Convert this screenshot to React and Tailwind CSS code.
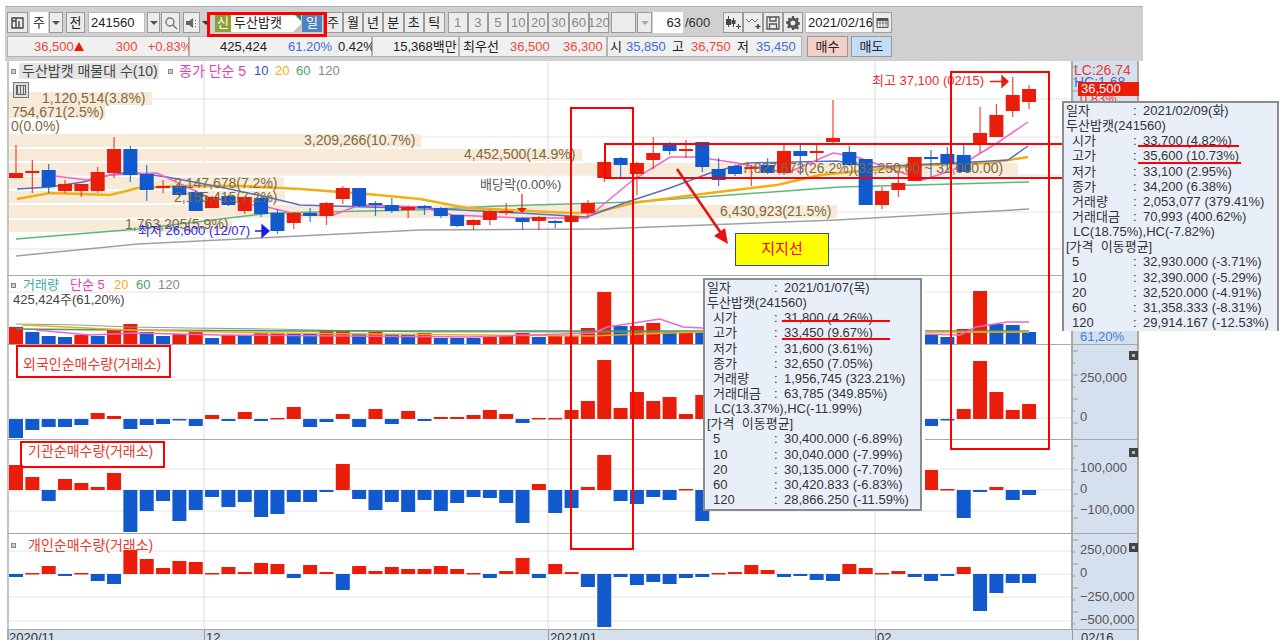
import React from 'react';

const RED = '#ea1c0a';
const BLUE = '#1159cc';
const barX = (i) => 16 + 16.34 * i;

// [colour, bodyTop, bodyBottom, wickTop, wickBottom]
const candles = [
  ['r', 173, 178, 145, 178], ['r', 171, 173, 160, 193], ['b', 170, 187, 164, 193], ['r', 184, 191, 180, 193],
  ['r', 184, 191, 184, 197], ['r', 172, 191, 167, 193], ['r', 149, 173, 137, 178], ['b', 149, 175, 146, 182],
  ['b', 174, 190, 165, 201], ['r', 186, 187, 180, 193], ['b', 186, 195, 183, 197], ['b', 192, 211, 190, 211],
  ['r', 197, 208, 196, 208], ['b', 196, 205, 195, 206], ['r', 197, 211, 196, 214], ['b', 198, 214, 197, 217],
  ['b', 213, 231, 209, 234], ['r', 213, 223, 212, 229], ['b', 213, 216, 208, 222], ['r', 203, 216, 202, 225],
  ['r', 188, 199, 186, 204], ['b', 188, 206, 188, 207], ['b', 203, 205, 201, 216], ['b', 205, 211, 198, 213],
  ['r', 207, 210, 206, 218], ['b', 206, 207, 205, 215], ['b', 208, 216, 207, 218], ['b', 215, 226, 215, 227],
  ['r', 220, 225, 219, 230], ['r', 211, 220, 210, 225], ['r', 211, 212, 203, 215], ['b', 218, 222, 217, 230],
  ['r', 217, 221, 216, 230], ['b', 221, 223, 220, 228], ['r', 216, 222, 215, 223], ['r', 203, 213, 200, 218],
  ['r', 162, 178, 162, 182], ['b', 158, 165, 157, 177], ['r', 163, 174, 162, 195], ['r', 153, 160, 137, 169],
  ['b', 144, 151, 142, 155], ['r', 149, 150, 140, 158], ['b', 142, 167, 142, 172], ['b', 169, 180, 158, 186],
  ['b', 166, 174, 165, 176], ['r', 167, 168, 165, 186], ['b', 165, 173, 158, 174], ['r', 151, 173, 145, 175],
  ['b', 151, 156, 145, 175], ['r', 151, 152, 145, 162], ['r', 138, 142, 100, 145], ['b', 152, 165, 146, 166],
  ['b', 159, 205, 159, 205], ['r', 191, 205, 187, 209], ['r', 183, 190, 173, 197], ['r', 157, 181, 157, 181],
  ['b', 157, 159, 150, 177], ['b', 154, 164, 147, 170], ['b', 155, 172, 145, 172], ['r', 133, 144, 107, 153],
  ['r', 115, 137, 104, 137], ['r', 95, 111, 77, 117], ['r', 89, 102, 85, 109],
];

const ma120 = '16,256 138,244 420,230 600,229 837,220 1029,209';
const ma60 = '16,239 138,229 270,213 417,210 500,206 633,202 840,187 1029,182';
const ma20 = '17,199 50,193 110,195 138,188 180,186 240,186 300,189 367,194 420,199 467,208 570,213 593,213 633,203 710,193 777,185 820,175 923,165 990,163 1028,157';
const ma10 = '17,189 50,187 83,182 110,175 130,172 167,177 220,187 267,197 300,205 367,207 420,208 520,213 587,217 627,202 670,188 710,173 747,163 837,161 873,167 973,162 1008,160 1028,146';
const ma5 = '55,176 87,180 110,175 157,173 187,187 207,197 267,207 300,215 333,215 360,205 420,207 453,215 520,218 587,218 633,180 670,157 697,157 737,163 787,173 833,153 857,157 923,180 953,170 997,143 1028,122';

// peach volume-profile bands: [top, height, right edge]
const bands = [
  [92, 13, 152], [105, 13, 105], [134, 13, 421], [149, 12, 582], [163, 12, 1018],
  [177, 12, 284], [191, 12, 285], [205, 13, 837], [220, 12, 232],
];

const volume = [
  ['r', 327], ['b', 332], ['b', 336], ['b', 337], ['r', 335], ['b', 336], ['r', 330], ['r', 324], ['b', 332], ['b', 336],
  ['r', 334], ['r', 331], ['b', 338], ['r', 335], ['b', 335], ['r', 333], ['r', 333], ['b', 333], ['b', 334], ['r', 330],
  ['r', 330], ['b', 334], ['r', 332], ['b', 334], ['b', 334], ['r', 333], ['b', 338], ['b', 338], ['b', 338], ['r', 337],
  ['r', 335], ['r', 333], ['b', 337], ['r', 336], ['r', 336], ['r', 328], ['r', 292], ['b', 326], ['r', 326], ['r', 323],
  ['b', 332], ['r', 332], ['b', 332], ['b', 333], ['r', 334], ['b', 335], ['r', 333], ['b', 334], ['r', 335], ['b', 336],
  ['r', 334], ['r', 333], ['b', 333], ['r', 335], ['r', 334], ['b', 334], ['b', 335], ['b', 337], ['r', 329], ['r', 291],
  ['b', 324], ['b', 325], ['b', 332],
];

// signed pixel heights from the zero line, up is positive
const foreign = [
  -19, -11, -8, -8, -6, 6, 3, -10, -6, -5, -1, -7, 4, -2, 7, -2, 1, 12, -8, -3, 5, -8, 10, -5, 8, -2, 2, 2, 4, 9, 5, -4, 1, 1, 9, 18, 59, 11, 27, 18, 22, 5, 24,
  -6, -3, 4, 5, 8, -5, -3, 6, 5, -4, 4, 2, -11, -7, -1, 10, 58, 27, 9, 15,
];
const institution = [
  25, 13, -11, 11, 7, 3, 17, -42, -21, -11, -31, -20, -7, -17, -12, -27, -24, -12, -12, -2, 26, -9, -20, -12, -22, -10, -21, -13, -7, -8, -13, -33, 6, -23, -18, 3, 35, -11, -14, -7, -10, 1, -31,
  -10, -5, 3, 6, -8, 4, -6, -12, 9, -4, 2, -3, -6, 20, 1, -28, -2, 3, -10, -5,
];
const individual = [
  -3, 1, 8, -2, 1, -7, -10, 24, 15, 6, 13, 12, 1, 7, 2, 11, 10, -4, 9, 2, -16, 8, 3, 7, 5, 5, 8, 5, 1, -4, 3, 16, -4, 10, 2, -13, -53, -3, -11, -8, -10, -4, -3,
  1, 2, 9, 4, -3, -2, -6, -7, 10, 6, 1, 3, -3, -7, -2, 7, -37, -19, -9, -9,
];

const tip1 = [
  ['일자', '2021/01/07(목)', false], ['두산밥캣(241560)'],
  ['시가', '31,800 (4.26%)', true], ['고가', '33,450 (9.67%)', true], ['저가', '31,600 (3.61%)', true], ['종가', '32,650 (7.05%)', true],
  ['거래량', '1,956,745 (323.21%)', true], ['거래대금', '63,785 (349.85%)', true], ['  LC(13.37%),HC(-11.99%)'], ['[가격  이동평균]'],
  ['5', '30,400.000 (-6.89%)', true], ['10', '30,040.000 (-7.99%)', true], ['20', '30,135.000 (-7.70%)', true], ['60', '30,420.833 (-6.83%)', true], ['120', '28,866.250 (-11.59%)', true],
];
const tip2 = [
  ['일자', '2021/02/09(화)', false], ['두산밥캣(241560)'],
  ['시가', '33,700 (4.82%)', true], ['고가', '35,600 (10.73%)', true], ['저가', '33,100 (2.95%)', true], ['종가', '34,200 (6.38%)', true],
  ['거래량', '2,053,077 (379.41%)', true], ['거래대금', '70,993 (400.62%)', true], ['  LC(18.75%),HC(-7.82%)'], ['[가격  이동평균]'],
  ['5', '32,930.000 (-3.71%)', true], ['10', '32,390.000 (-5.29%)', true], ['20', '32,520.000 (-4.91%)', true], ['60', '31,358.333 (-8.31%)', true], ['120', '29,914.167 (-12.53%)', true],
];

function Btn({ w, children, className = '' }) {
  return (
    <div className={`flex h-[21px] shrink-0 items-center justify-center border border-[#9a9a9a] bg-[#ececec] ${w} ${className}`}>
      {children}
    </div>
  );
}

function Caret({ color = '#555' }) {
  return <div className="h-0 w-0 border-x-[4px] border-t-[4px] border-x-transparent" style={{ borderTopColor: color }} />;
}

function Toolbar() {
  return (
    <div className="flex h-[55px] flex-col gap-[3px] border-t border-[#a8aec4] bg-[#d0d0d0] pl-[2px] pt-[5px] text-[13px] leading-4 text-[#222]">
      <div className="flex items-center">
        <Btn w="w-[21px]">
          <svg width="15" height="15" viewBox="0 0 15 15" fill="none" stroke="#444" strokeWidth="1.4"><path d="M2 3h11v10H2zM6 3v10M2 6h4M9 6v7" /></svg>
        </Btn>
        <div className="ml-[2px] flex h-[21px] w-[18px] items-center justify-center bg-white">주</div>
        <Btn w="w-[14px]" className="ml-[1px]"><Caret /></Btn>
        <Btn w="w-[19px]" className="ml-[3px]">전</Btn>
        <div className="ml-[3px] flex h-[21px] w-[57px] items-center border border-[#bbb] bg-white pl-[2px]">241560</div>
        <Btn w="w-[13px]" className="ml-[2px]"><Caret /></Btn>
        <Btn w="w-[19px]" className="ml-[1px]">
          <svg width="14" height="14" viewBox="0 0 14 14" fill="none" stroke="#777" strokeWidth="1.4"><circle cx="6" cy="6" r="4" /><path d="M9 9l4 4" /></svg>
        </Btn>
        <Btn w="w-[17px]" className="ml-[3px]">
          <svg width="13" height="12" viewBox="0 0 13 12" fill="#666"><path d="M1 4h3l4-3v10L4 8H1z" /><path d="M10 3h1v1h-1zM10 6h1v1h-1zM10 9h1v1h-1z" /></svg>
        </Btn>
        <div className="ml-[2px] flex w-[8px] justify-center"><Caret color="#333" /></div>
        <div className="ml-[5px] flex h-[19px] w-[16px] items-center justify-center bg-[#8c9f34] text-white">신</div>
        <div className="relative flex h-[19px] w-[70px] items-center bg-white pl-[3px] text-[13px]">
          두산밥캣
          <div className="absolute right-0 top-0 h-0 w-0 border-l-[8px] border-t-[8px] border-l-transparent border-t-[#16a05a]" />
          <div className="absolute bottom-0 right-0 h-0 w-0 border-b-[8px] border-l-[8px] border-b-[#c4c4c4] border-l-transparent" />
        </div>
        <div className="ml-[1px] flex h-[19px] w-[20px] items-center justify-center bg-[#4f82c0] text-white">일</div>
        <div className="ml-[1px] flex">
          {['주', '월', '년'].map((t) => <Btn key={t} w="w-[20px]">{t}</Btn>)}
        </div>
        <div className="flex">
          {['분', '초', '틱'].map((t) => <Btn key={t} w="w-[20.5px]">{t}</Btn>)}
        </div>
        <div className="ml-[3px] flex text-[#888]">
          {['1', '3', '5', '10', '20', '30', '60', '120'].map((t) => <Btn key={t} w="w-[20.2px]">{t}</Btn>)}
        </div>
        <Btn w="w-[25px]" className="ml-[2px]" />
        <Btn w="w-[15px]" className="ml-[1px]"><Caret color="#aaa" /></Btn>
        <div className="ml-[1px] flex h-[21px] w-[30px] items-center justify-end bg-white pr-[2px]">63</div>
        <div className="ml-[2px] w-[38px] text-[#333]">/600</div>
        <Btn w="w-[20px]">
          <svg width="16" height="14" viewBox="0 0 16 14" fill="#444"><path d="M3 0h1v11H3zM1 3h5v6H1zM8 2h1v9H8zM6.5 4h4v4h-4zM13 8h1v2h2v1h-2v2h-1v-2h-2v-1h2z" /></svg>
        </Btn>
        <Btn w="w-[20px]">
          <svg width="16" height="14" viewBox="0 0 16 14" fill="none" stroke="#777"><path d="M1 3l3 3 3-3 3 3 3-3" /><path d="M13 8v5M10.500 10.500h5" stroke="#444" strokeWidth="1.500" /></svg>
        </Btn>
        <Btn w="w-[20px]">
          <svg width="14" height="14" viewBox="0 0 14 14" fill="none" stroke="#555" strokeWidth="1.300"><path d="M1 1h12v12H1zM4 1v4h6V1M3.500 13V8h7v5" /></svg>
        </Btn>
        <Btn w="w-[20px]">
          <svg width="14" height="14" viewBox="0 0 14 14" fill="#555"><path d="M6 0h2l.4 2 1.500.6L11.600 1.500l1.400 1.400-1.100 1.700.6 1.500 2 .4v2l-2 .4-.6 1.500 1.100 1.700-1.400 1.400-1.700-1.100-1.500.6L8 14H6l-.4-2-1.500-.6-1.700 1.100L1 11.100l1.100-1.700-.6-1.500L0 7.500v-2l2-.4.6-1.500L1.500 2.900 2.900 1.500l1.700 1.100L5.600 2zM7 4.500a2.500 2.500 0 100 5 2.500 2.500 0 000-5z" /></svg>
        </Btn>
        <div className="ml-[2px] flex h-[21px] w-[68px] items-center border border-[#bbb] bg-white pl-[2px] text-[#222]">2021/02/16</div>
        <Btn w="w-[19px]">
          <svg width="13" height="12" viewBox="0 0 13 12" fill="none" stroke="#555"><path d="M1 1.500h11v9H1z" /><path d="M1 3h11" strokeWidth="2" /><path d="M4 3v7M7 3v7M10 3v7M1 6h11" strokeWidth=".6" /></svg>
        </Btn>
      </div>
      <div className="flex items-center">
        <Quote w="w-[182px]">
          <span className="ml-[26px] w-[43px] text-[#ea4a3c]">36,500</span>
          <span className="h-0 w-0 border-x-[5px] border-b-[9px] border-x-transparent border-b-[#ea1c0a]" />
          <span className="ml-[32px] w-[19px] text-[#ea4a3c]">300</span>
          <span className="ml-[13px] text-[#ea4a3c]">+0.83%</span>
        </Quote>
        <Quote w="w-[183px]">
          <span className="ml-[30px] w-[45px]">425,424</span>
          <span className="ml-[23px] w-[39px] text-[#3f6fcf]">61.20%</span>
          <span className="ml-[11px]">0.42%</span>
        </Quote>
        <Quote w="w-[87px]"><span className="ml-[20px]">15,368백만</span></Quote>
        <Quote w="w-[148px]">
          <span className="ml-[3px] w-[37px]">최우선</span>
          <span className="ml-[10px] w-[39px] text-[#ea4a3c]">36,500</span>
          <span className="ml-[14px] text-[#ea4a3c]">36,300</span>
        </Quote>
        <Quote w="w-[195px]">
          <span className="ml-[2px] w-[16px]">시</span>
          <span className="w-[40px] text-[#3f6fcf]">35,850</span>
          <span className="ml-[6px] w-[19px]">고</span>
          <span className="w-[39px] text-[#ea4a3c]">36,750</span>
          <span className="ml-[7px] w-[19px]">저</span>
          <span className="text-[#3f6fcf]">35,450</span>
        </Quote>
        <div className="ml-[5px] flex h-[21px] w-[41px] items-center justify-center border border-[#9a9a9a] bg-[#f5d0c8]">매수</div>
        <div className="ml-[3px] flex h-[21px] w-[41px] items-center justify-center border border-[#9a9a9a] bg-[#c5dcf5]">매도</div>
      </div>
    </div>
  );
}

function Quote({ w, children }) {
  return <div className={`flex h-[21px] shrink-0 items-center whitespace-nowrap border border-[#b4b4b4] bg-[#f0f0f0] ${w}`}>{children}</div>;
}

function Grid({ top, height, lines }) {
  return (
    <g>
      {lines.map((y) => <line key={y} x1="8" x2="1072" y1={y} y2={y} stroke="#e4e4e4" strokeWidth="1" />)}
      {[204, 548, 875].map((x) => <line key={x} x1={x} x2={x} y1={top} y2={top + height} stroke="#dcdcdc" strokeWidth="1" />)}
    </g>
  );
}

function Bars({ data, zero }) {
  return data.map((h, i) => (
    <rect key={i} x={barX(i) - 7} width="14" y={h > 0 ? zero - h : zero} height={Math.max(Math.abs(h), 1.5)} fill={h > 0 ? RED : BLUE} />
  ));
}

function Panel({ top, height, lines, children, axis }) {
  return (
    <div className="flex border-b border-[#a8a8a8]" style={{ height }}>
      <div className="relative w-[1064px] shrink-0 border-l-2 border-[#c4c4c4] bg-white">
        <svg width="1062" height={height - 1} viewBox={`9 ${top} 1062 ${height - 1}`} className="absolute left-0 top-0">
          <Grid top={top} height={height} lines={lines} />
          {children}
        </svg>
      </div>
      <div className="relative w-[68px] shrink-0 border-x-2 border-[#a8a8a8] bg-[#d5e0ee]">
        <svg width="8" height={height - 1} className="absolute left-0 top-0">
          {Array.from({ length: Math.floor(height / 12) }, (_, i) => (
            <line key={i} x1="0" x2={i % 2 ? 2 : 5} y1={6 + i * 12} y2={6 + i * 12} stroke="#999" />
          ))}
        </svg>
        {axis}
      </div>
    </div>
  );
}

function Label({ x, y, className = '', children }) {
  return (
    <div className={`absolute whitespace-pre leading-4 ${className}`} style={{ left: x, top: y - 8 }}>
      {children}
    </div>
  );
}

function Close({ y }) {
  return (
    <div className="absolute left-[56px] flex h-[9px] w-[9px] items-center justify-center bg-[#444]" style={{ top: y }}>
      <div className="h-[3px] w-[3px] bg-[#bbb]" />
    </div>
  );
}

function Tip({ className, rows }) {
  return (
    <div className={`absolute border-2 border-[#8c8c8c] bg-[#e8eff9] pl-[2px] text-[13px] leading-[15.15px] text-[#333] ${className}`}>
      {rows.map((r, i) => (
        <div key={i} className="flex h-[15.15px] whitespace-pre">
          {r.length === 1 ? r[0] : (
            <>
              <div className={`w-[67px] shrink-0 ${r[2] ? 'pl-[6px]' : ''}`}>{r[0]}</div>
              <div className="w-[10px] shrink-0">:</div>
              <div>{r[1]}</div>
            </>
          )}
        </div>
      ))}
    </div>
  );
}

export default function App() {
  return (
    <div className="relative h-[640px] w-[1283px] overflow-hidden bg-white font-['Liberation_Sans','Noto_Sans_CJK_KR',sans-serif] text-[13px]">
      <div className="ml-[5px] w-[1138px] pt-[6px]">
        <Toolbar />
        <div className="ml-[2px] w-[1132px]">
          {/* main candle chart */}
          <Panel top={61} height={215} lines={[99, 137, 175, 212, 249]} axis={
            <>
              <Label x={1} y={9} className="text-[14px] text-[#ea3a2c]">LC:26.74</Label>
              <Label x={1} y={21} className="text-[14px] text-[#3f6fcf]">HC:1.68</Label>
              <div className="absolute left-[5px] top-[21px] h-[14px] w-[61px] bg-[#ea1c0a] pl-[3px] text-[13px] leading-[14px] text-white">36,500</div>
              <Label x={7} y={38} className="text-[#ea3a2c]">0.83%</Label>
            </>
          }>
            {bands.map(([y, h, r]) => <rect key={y} x="8" y={y} width={r - 8} height={h} fill="#f7ead9" />)}
            <polyline points={ma120} fill="none" stroke="#a0a0a0" strokeWidth="1.500" />
            <polyline points={ma60} fill="none" stroke="#5cb87a" strokeWidth="1.500" />
            <polyline points={ma20} fill="none" stroke="#f2ae16" strokeWidth="2.500" />
            <polyline points={ma10} fill="none" stroke="#5570c8" strokeWidth="1.500" />
            <polyline points={ma5} fill="none" stroke="#ee66cc" strokeWidth="1.500" />
            {candles.map(([c, t, b, hi, lo], i) => (
              <g key={i} fill={c === 'r' ? RED : BLUE}>
                <rect x={barX(i) - 0.6} y={hi} width="1.200" height={lo - hi} opacity="0.8" />
                <rect x={barX(i) - 7} y={t} width="14" height={Math.max(b - t, 2)} />
              </g>
            ))}
            <path d="M522 194v14" stroke="#ea1c0a" strokeWidth="1.200" />
            <path d="M517 208h10l-5 5z" fill="#ea1c0a" />
            <path d="M990 81.500h12M1002 76l6 5.500-6 5.500z" stroke="#ea1c0a" fill="#ea1c0a" strokeWidth="1.300" />
            <path d="M255 231h12M262 225l7 6-7 6z" stroke="#1a1af0" fill="#1a1af0" strokeWidth="1.300" />
          </Panel>

          {/* volume */}
          <Panel top={276} height={69} lines={[292]} axis={<Label x={7} y={61} className="text-[#3f7fdf]">61,20%</Label>}>
            {volume.map(([c, y], i) => <rect key={i} x={barX(i) - 7} y={y} width="14" height={344 - y} fill={c === 'r' ? RED : BLUE} />)}
            <polyline points="16,324 80,325 130,327 190,328 270,329 318,330 420,332 1029,332" fill="none" stroke="#999" strokeWidth="1.200" />
            <polyline points="16,329 120,330 300,331 600,331 1029,331" fill="none" stroke="#3e9a5e" strokeWidth="1.500" />
            <polyline points="22,325 130,330 270,333 590,336 640,334 700,332 1029,332" fill="none" stroke="#f2ae16" strokeWidth="1.500" />
            <polyline points="36,330 90,335 134,333 220,335 470,337 594,333 607,327 660,319 683,327 702,328 960,335 976,327 1007,322 1029,322" fill="none" stroke="#ee66cc" strokeWidth="1.500" />
          </Panel>

          {/* foreign net buying */}
          <Panel top={345} height={95} lines={[380, 418]} axis={
            <>
              <Close y={6} />
              <Label x={7} y={33} className="text-[#555]">250,000</Label>
              <Label x={7} y={72} className="text-[#555]">0</Label>
            </>
          }>
            <Bars data={foreign} zero={419} />
          </Panel>

          {/* institution net buying */}
          <Panel top={440} height={94} lines={[469, 490, 511]} axis={
            <>
              <Close y={8} />
              <Label x={7} y={28} className="text-[#555]">100,000</Label>
              <Label x={7} y={49} className="text-[#555]">0</Label>
              <Label x={7} y={70} className="text-[#555]">−100,000</Label>
            </>
          }>
            <Bars data={institution} zero={490} />
          </Panel>

          {/* individual net buying */}
          <Panel top={534} height={96} lines={[551, 574, 597, 621]} axis={
            <>
              <Close y={9} />
              <Label x={7} y={16} className="text-[#555]">250,000</Label>
              <Label x={7} y={39} className="text-[#555]">0</Label>
              <Label x={7} y={63} className="text-[#555]">−250,000</Label>
              <Label x={7} y={86} className="text-[#555]">−500,000</Label>
            </>
          }>
            <Bars data={individual} zero={574} />
          </Panel>

          {/* date axis */}
          <div className="flex h-[10px] items-start overflow-hidden border-x-2 border-[#a8a8a8] bg-[#d5e0ee] text-[13px] leading-4 text-[#333]">
            <span className="w-[195px]">2020/11</span>
            <span className="w-[344px] border-l border-[#999] pl-px">12</span>
            <span className="w-[327px] border-l border-[#999] pl-px">2021/01</span>
            <span className="w-[197px] border-l border-[#999] pl-px">02</span>
            <span className="border-l border-[#999] pl-[8px]">02/16</span>
          </div>
        </div>
      </div>

      {/* chart legends and labels */}
      <div className="absolute left-[11px] top-[69px] h-[5px] w-[5px] border border-[#888] bg-[#ccc]" />
      <div className="absolute left-[19px] top-[63px] h-[16px] w-[140px] bg-[#e4e4e4] pl-[3px] text-[14px] leading-4 text-[#444]">두산밥캣 매물대 수(10)</div>
      <div className="absolute left-[168px] top-[69px] h-[5px] w-[5px] border border-[#888] bg-[#ccc]" />
      <Label x={179} y={71} className="text-[14px] text-[#e040c0]">종가 단순 5</Label>
      <Label x={254} y={71} className="text-[#2f50c8]">10</Label>
      <Label x={275} y={71} className="text-[#f2ae16]">20</Label>
      <Label x={296} y={71} className="text-[#3ea860]">60</Label>
      <Label x={318} y={71} className="text-[#888]">120</Label>
      <div className="absolute left-[13px] top-[82px] flex h-[16px] w-[16px] items-center justify-center border border-[#777] bg-[#ddd]">
        <div className="h-[10px] w-[10px] border border-[#666] bg-[repeating-linear-gradient(90deg,#666_0,#666_1px,transparent_1px,transparent_3px)]" />
      </div>
      <Label x={42} y={98} className="text-[14px] text-[#806a3c]">1,120,514(3.8%)</Label>
      <Label x={12} y={112} className="text-[14px] text-[#806a3c]">754,671(2.5%)</Label>
      <Label x={11} y={126} className="text-[14px] text-[#806a3c]">0(0.0%)</Label>
      <Label x={304} y={140} className="text-[14px] text-[#806a3c]">3,209,266(10.7%)</Label>
      <Label x={464} y={154} className="text-[14px] text-[#806a3c]">4,452,500(14.9%)</Label>
      <Label x={742} y={168} className="text-[14px] text-[#806a3c]">7,827,673(26.2%)(32,250.00 ~ 32,000.00)</Label>
      <Label x={174} y={183} className="text-[14px] text-[#806a3c]">2,147,678(7.2%)</Label>
      <Label x={174} y={197} className="text-[14px] text-[#806a3c]">2,155,415(7.2%)</Label>
      <Label x={720} y={211} className="text-[14px] text-[#806a3c]">6,430,923(21.5%)</Label>
      <Label x={125} y={224} className="text-[14px] text-[#806a3c]">1,763,205(5.9%)</Label>
      <Label x={138} y={231} className="text-[#2a2af0]">최저 26,600 (12/07)</Label>
      <Label x={480} y={185} className="text-[#555]">배당락(0.00%)</Label>
      <Label x={872} y={81} className="text-[#f02a2a]">최고 37,100 (02/15)</Label>

      <div className="absolute left-[11px] top-[283px] h-[5px] w-[5px] border border-[#888] bg-[#ccc]" />
      <Label x={23} y={285} className="text-[#3ea8a8]">거래량</Label>
      <Label x={70} y={285} className="text-[#e040c0]">단순 5</Label>
      <Label x={114} y={285} className="text-[#f2ae16]">20</Label>
      <Label x={136} y={285} className="text-[#3ea860]">60</Label>
      <Label x={158} y={285} className="text-[#888]">120</Label>
      <Label x={13} y={300} className="text-[#444]">425,424주(61,20%)</Label>

      <Label x={23} y={364} className="text-[14px] text-[#ea3a2c]">외국인순매수량(거래소)</Label>
      <Label x={28} y={451} className="text-[14px] text-[#ea3a2c]">기관순매수량(거래소)</Label>
      <div className="absolute left-[11px] top-[543px] h-[5px] w-[5px] border border-[#888] bg-[#ccc]" />
      <Label x={28} y={545} className="text-[14px] text-[#ea3a2c]">개인순매수량(거래소)</Label>

      {/* tooltips */}
      <div className="absolute left-[921px] top-[290px] h-[220px] w-[4px] bg-white" />
      <Tip className="left-[703px] top-[278px] h-[233px] w-[219px]" rows={tip1} />
      <Tip className="left-[1062px] top-[101px] h-[230px] w-[217px] border-b-0" rows={tip2} />

      {/* red annotations drawn over the chart */}
      <div className="absolute left-[207px] top-[12px] h-[25px] w-[120px] border-[3px] border-[#ff0000]" />
      <div className="absolute left-[16px] top-[345px] h-[33px] w-[155px] border-2 border-[#ff0000]" />
      <div className="absolute left-[20px] top-[441px] h-[27px] w-[145px] border-2 border-[#ff0000]" />
      <div className="absolute left-[570px] top-[107px] h-[443px] w-[64px] border-2 border-[#ff0000]" />
      <div className="absolute left-[950px] top-[71px] h-[379px] w-[100px] border-2 border-[#ff0000]" />
      <div className="absolute left-[604px] top-[143px] h-[36px] w-[458px] border-y-2 border-l-2 border-[#ff0000]" />
      <div className="absolute left-[782px] top-[320px] h-[2px] w-[108px] bg-[#ff0000]" />
      <div className="absolute left-[782px] top-[338px] h-[2px] w-[108px] bg-[#ff0000]" />
      <div className="absolute left-[1138px] top-[145px] h-[2px] w-[101px] bg-[#ff0000]" />
      <div className="absolute left-[1138px] top-[162px] h-[2px] w-[103px] bg-[#ff0000]" />
      <svg className="absolute left-[670px] top-[160px]" width="70" height="90" viewBox="0 0 70 90">
        <path d="M7 9L53 76" stroke="#e81010" strokeWidth="2.500" />
        <path d="M58 84L44 76L55 68z" fill="#e81010" />
      </svg>
      <div className="absolute left-[735px] top-[233px] flex h-[33px] w-[94px] items-center justify-center border border-[#2f528f] bg-[#ffff00] text-[15px] text-[#ff0000]">지지선</div>
    </div>
  );
}
